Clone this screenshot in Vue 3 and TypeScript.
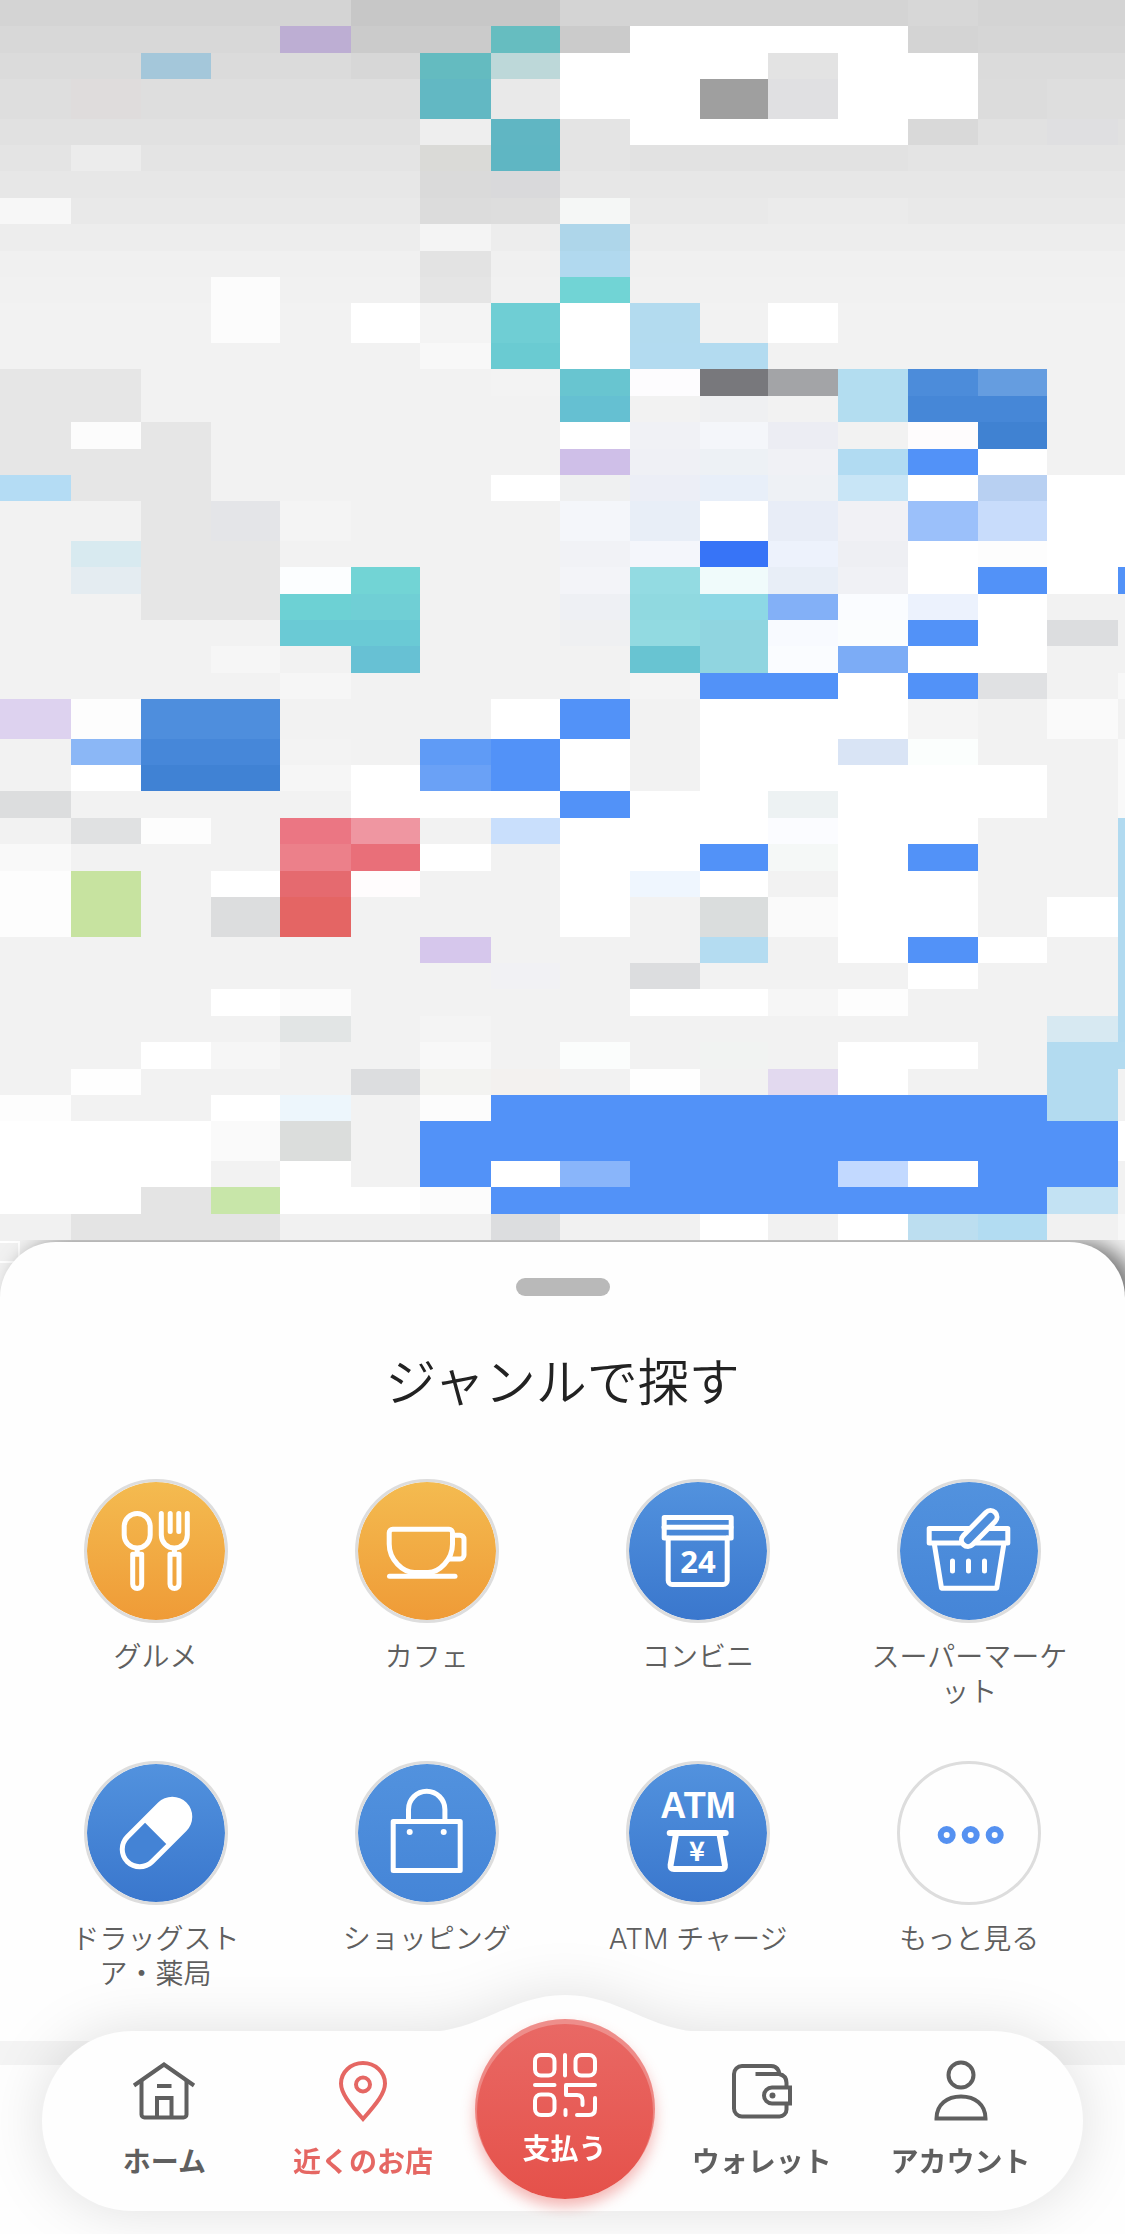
<script setup lang="ts">
interface Tile {
  x: number
  y: number
  w: number
  h: number
  fill: string
}

interface MapRow {
  top: number
  base: string
  tiles: string
}

// Column edges of the map tiles; the last tile runs off the right side.
const columns = [0, 71, 141, 211, 280, 351, 420, 491, 560, 630, 700, 768, 838, 908, 978, 1047, 1118, 1125]
const mapHeight = 1240

// Each entry of `tiles` is "column:colour" or "first-last:colour".
const rows: MapRow[] = [
  { top: 0, base: 'd4d4d4', tiles: '5-7:c7c7c7 13:d7d7d7' },
  { top: 26, base: 'd8d8d8', tiles: '4:bdaed3 5-6:cbcbcb 7:66bdc0 8:cbcbcb 9-12:ffffff 13:d4d4d4 14-16:d6d6d6' },
  { top: 53, base: 'dbdbdb', tiles: '2:a4c7da 5:d7d7d7 6:64bbc0 7:bdd8d9 8-10:ffffff 11:e3e3e3 12-13:ffffff' },
  { top: 79, base: 'dedede', tiles: '1:dfdcdc 6:62b8c3 7:e9e9e9 8-9:ffffff 10:9f9f9f 11:e0e0e2 12-13:ffffff 14:dcdcdc' },
  { top: 119, base: 'e1e1e1', tiles: '6:eeeeee 7:60b6c3 8:e4e4e4 9-12:ffffff 13:d9d9d9 15:dfdfe1' },
  { top: 145, base: 'e4e4e4', tiles: '1:ececec 6:dadad7 7:5fb6c3 9-12:e2e2e2' },
  { top: 171, base: 'e7e7e7', tiles: '6:dadada 7:d9d9db' },
  { top: 198, base: 'e9e9e9', tiles: '0:f7f7f7 6:dcdcdc 7:dddddd 8:f5f7f6 11-12:ebebeb' },
  { top: 224, base: 'ededed', tiles: '6:f4f4f4 8:aed6ea' },
  { top: 251, base: 'f0f0f0', tiles: '6:e3e3e3 8:b1d9ef' },
  { top: 277, base: 'f1f1f1', tiles: '3:fcfcfc 6:e5e5e5 8:71d4d5' },
  { top: 303, base: 'f2f2f2', tiles: '3:fcfcfc 5:ffffff 6:f4f4f4 7:6fced4 8:ffffff 9:b3dbef 11:ffffff' },
  { top: 343, base: 'f2f2f2', tiles: '6:f8f8f8 7:6acbd2 8:ffffff 9-10:b3dbf0' },
  { top: 369, base: 'f2f2f2', tiles: '0-1:e6e6e6 7:f3f3f3 8:68c5d0 9:fdfcfe 10:78787c 11:a3a4a7 12:b3ddf0 13:4c8cda 14:659de0' },
  { top: 396, base: 'f2f2f2', tiles: '0-1:e6e6e6 8:65c0d2 10:eff0f2 12:b3ddf0 13-14:4687d7' },
  { top: 422, base: 'f2f2f2', tiles: '0:e6e6e6 1:fcfcfc 2:e6e6e6 8:ffffff 9:f0f1f5 10:f4f6fa 11:ecedf3 13:fefcfd 14:4082d2' },
  { top: 449, base: 'f2f2f2', tiles: '0-2:e6e6e6 8:cfbfe8 9:eff0f5 10:edf1f5 11:f0f1f5 12:b1dbf2 13:5292f8 14:ffffff' },
  { top: 475, base: 'f2f2f2', tiles: '0:b4dcf4 1-2:e6e6e6 7:ffffff 8:eff0f1 9:eceef6 10:e8eff9 11:eef1f5 12:c8e5f6 13:ffffff 14:b8d0f2 15-16:ffffff' },
  { top: 501, base: 'f2f2f2', tiles: '2:e6e6e6 3:e4e5e8 4:f4f4f4 8:f4f6fa 9:e8eef7 10:ffffff 11:e8edf7 12:f1f1f5 13:9bc0fa 14:c8dcfb 15-16:ffffff' },
  { top: 541, base: 'f2f2f2', tiles: '1:d8eaf0 2-3:e6e6e6 8:f1f2f6 9:f4f6fb 10:3774f7 11:edf2fc 12:eeeff3 13:ffffff 14:fdfdfd 15-16:ffffff' },
  { top: 567, base: 'f2f2f2', tiles: '1:e4ecf1 2-3:e6e6e6 4:fcfeff 5:72d4d5 8:f3f4f8 9:93dbe2 10:f0fbfb 11:e8eef7 12:f0f1f5 13:ffffff 14:5292f8 15:ffffff 16:5292f8' },
  { top: 594, base: 'f2f2f2', tiles: '2-3:e6e6e6 4:6dd1d4 5:70cfd5 8:eef0f4 9:90d9e0 10:8dd8e5 11:83b0f7 12:fafcff 13:ecf2fd 14:ffffff' },
  { top: 620, base: 'f2f2f2', tiles: '4-5:6acad5 8:eff0f2 9:92dae1 10:90d5e0 11:f8faff 12:fbfdfe 13:5292f8 14:ffffff 15:dcdddf' },
  { top: 646, base: 'f2f2f2', tiles: '3:f6f6f6 5:67c1d4 9:68c4d2 10:90d5e0 11:fafcff 12:7cacf6 13-14:ffffff' },
  { top: 673, base: 'f2f2f2', tiles: '4:f6f6f6 9:f4f4f4 10-11:5292f8 12:ffffff 13:5292f8 14:e0e1e3 16:f8f8f8' },
  { top: 699, base: 'f2f2f2', tiles: '0:ddd2ef 1:fdfdfd 2-3:4e8edd 7:ffffff 8:5292f8 10-12:ffffff 13:f5f5f5 15:fafafa' },
  { top: 739, base: 'f2f2f2', tiles: '1:8bb7f6 2-3:4687d9 4:f3f3f3 6:5f9bf6 7:5292f8 8:ffffff 10-11:ffffff 12:d9e4f5 13:fbfefd 16:f9f9f9' },
  { top: 765, base: 'f2f2f2', tiles: '1:ffffff 2-3:4082d4 4:f6f6f6 5:ffffff 6:6aa1f6 7:5292f8 8:ffffff 10-14:ffffff 16:f9f9f9' },
  { top: 791, base: 'f2f2f2', tiles: '0:dcddde 5-7:ffffff 8:5292f8 9-10:ffffff 11:edf2f3 12-14:ffffff 16:f9f9f9' },
  { top: 818, base: 'f2f2f2', tiles: '1:e0e1e2 2:fdfdfd 4:eb7683 5:ef96a1 7:c9dffc 8-10:ffffff 11:fbfcff 12-13:ffffff 16:b1daf0' },
  { top: 844, base: 'f2f2f2', tiles: '0:f9f9f9 4:ec808a 5:e96f79 6:ffffff 8-9:ffffff 10:5292f8 11:f5f8f7 12:ffffff 13:5292f8 16:b1daf0' },
  { top: 871, base: 'f2f2f2', tiles: '0:fdfdfd 1:c7e3a0 3:ffffff 4:e56a6f 5:fffcfd 8:ffffff 9:eff6fe 10:ffffff 12-13:ffffff 16:b1daf0' },
  { top: 897, base: 'f2f2f2', tiles: '0:fdfdfd 1:c7e3a0 3:dcddde 4:e46564 8:ffffff 10:dadddd 11:fafafa 12-13:ffffff 15:ffffff 16:b1daf0' },
  { top: 937, base: 'f2f2f2', tiles: '6:d6c7ec 10:b4dcf1 12:ffffff 13:5292f8 14:ffffff 16:b1daf0' },
  { top: 963, base: 'f2f2f2', tiles: '7:f1f1f4 9:dcdddf 13:ffffff 16:b1daf0' },
  { top: 989, base: 'f2f2f2', tiles: '3:ffffff 4:fbfbfb 9-10:ffffff 11:f6f6f6 12:fdfdfd 16:b1daf0' },
  { top: 1016, base: 'f2f2f2', tiles: '4:e2e5e5 6:f4f4f4 15:d7e9f2 16:b1daf0' },
  { top: 1042, base: 'f2f2f2', tiles: '2:ffffff 3:f6f6f6 6:f8f8f8 8:fbfdfc 10:f1f3f2 12-13:ffffff 15-16:b3dbf0' },
  { top: 1069, base: 'f2f2f2', tiles: '1:fefefe 5:dcdddf 6:f3f3f1 7:f3f1ef 9:fefefe 11:e2d9ef 12:ffffff 15:b3dbf0' },
  { top: 1095, base: 'f2f2f2', tiles: '0:fdfdfd 3:ffffff 4:edf6fc 6:fcfcfc 7-14:5292f8 15:b3dbf0' },
  { top: 1121, base: 'f2f2f2', tiles: '0-2:ffffff 3:fafafa 4:dbdddc 6-15:5292f8 16:ffffff' },
  { top: 1161, base: 'f2f2f2', tiles: '0-2:ffffff 4:ffffff 6:5292f8 7:ffffff 8:89b5fa 9-11:5292f8 12:c2d9ff 13:ffffff 14-15:5292f8' },
  { top: 1187, base: 'f2f2f2', tiles: '0-1:ffffff 2:e4e4e4 3:c8e6a9 4-5:ffffff 6:fcfcfc 7-14:5292f8 15:c3e2f3' },
  { top: 1214, base: 'f1f1f1', tiles: '1-3:e4e4e4 7:dcdddf 10:ffffff 12:ffffff 13:bcdef0 14:b2dcf2 16:f7f7f7' },
]

const tiles: Tile[] = rows.flatMap((row, i) => {
  const bottom = i + 1 < rows.length ? rows[i + 1].top : mapHeight
  const h = bottom - row.top
  const base: Tile = { x: 0, y: row.top, w: 1125, h, fill: '#' + row.base }
  const own = row.tiles.split(' ').map((entry): Tile => {
    const [range, colour] = entry.split(':')
    const [first, last = first] = range.split('-').map(Number)
    return { x: columns[first], y: row.top, w: columns[last + 1] - columns[first], h, fill: '#' + colour }
  })
  return [base, ...own]
})

interface Genre {
  id: string
  label: string
  tone: string
}

const genres: Genre[] = [
  { id: 'gourmet', label: 'グルメ', tone: 'orange' },
  { id: 'cafe', label: 'カフェ', tone: 'orange' },
  { id: 'convenience', label: 'コンビニ', tone: 'blue' },
  { id: 'supermarket', label: 'スーパーマーケット', tone: 'sky' },
  { id: 'drugstore', label: 'ドラッグストア・薬局', tone: 'blue' },
  { id: 'shopping', label: 'ショッピング', tone: 'sky' },
  { id: 'atm', label: 'ATM チャージ', tone: 'blue' },
  { id: 'more', label: 'もっと見る', tone: 'plain' },
]

const tabs = [
  { id: 'home', label: 'ホーム' },
  { id: 'nearby', label: '近くのお店' },
  { id: 'pay', label: '支払う' },
  { id: 'wallet', label: 'ウォレット' },
  { id: 'account', label: 'アカウント' },
]
</script>

<template>
  <div class="app" lang="ja">
    <svg class="map" viewBox="0 0 1125 1240" shape-rendering="crispEdges" role="img" aria-label="地図">
      <rect v-for="(t, i) in tiles" :key="i" :x="t.x" :y="t.y" :width="t.w" :height="t.h" :fill="t.fill" />
    </svg>

    <div class="panel">
      <section class="sheet">
        <div class="handle"></div>
        <h1 class="title">ジャンルで探す</h1>
        <div class="genres">
          <button v-for="g in genres" :key="g.id" type="button" class="genre">
            <span class="disc" :class="g.tone">
              <svg class="glyph" viewBox="3 3 138 138" aria-hidden="true">
                <g v-if="g.id === 'gourmet'" class="line">
                  <rect x="40.2" y="34.5" width="26" height="34.5" rx="13" />
                  <path d="M48.7 75.2h9v29.8a4.5 4.5 0 0 1-9 0zM53.2 70v4" />
                  <path d="M77.3 34.5V56a13 13 0 0 0 26 0V34.5M86.2 34.5v18M94.8 34.5v18" />
                  <path d="M86 75.2h9v29.8a4.5 4.5 0 0 1-9 0zM90.4 70v4" />
                </g>
                <g v-else-if="g.id === 'cafe'" class="line">
                  <path d="M37.7 50.2H94a3.5 3.5 0 0 1 3.5 3.5V65C97.5 81 84 93.5 73 93.5H59.5C48 93.5 34.2 81 34.2 65V53.7a3.5 3.5 0 0 1 3.5-3.5z" />
                  <path d="M98.5 56.2H105a4 4 0 0 1 4 4V76a4 4 0 0 1-4 4H94" />
                  <path d="M34.5 97.3H100" />
                </g>
                <g v-else-if="g.id === 'convenience'" class="line">
                  <rect x="38.2" y="38.5" width="67" height="20.5" />
                  <path d="M38 48.2h67M42.2 59v42.5a4 4 0 0 0 4 4h51a4 4 0 0 0 4-4V59" />
                  <text class="digits" x="72" y="94">24</text>
                </g>
                <g v-else-if="g.id === 'supermarket'" class="line">
                  <rect x="32.2" y="49.5" width="78.6" height="14.5" />
                  <path d="M37.5 66l7 43.2h55.2l7-43.2" />
                  <path d="M55.5 82v10M71.5 82v10M87.5 82v10" />
                  <path class="grip-outer" d="M71 61L93.5 38" />
                  <path class="grip-inner" d="M71 61L93.5 38" />
                </g>
                <g v-else-if="g.id === 'drugstore'" transform="rotate(-45 72 72)">
                  <rect x="29" y="52" width="86" height="40" rx="20" fill="#fff" />
                  <path d="M71.5 57v30H49a15 15 0 0 1 0-30z" fill="#4483d5" />
                </g>
                <g v-else-if="g.id === 'shopping'" class="line">
                  <rect x="38.2" y="60.5" width="67" height="49" />
                  <path d="M53.5 60V48.5a18.2 18.2 0 0 1 36.4 0V60" />
                  <circle class="solid" cx="54.7" cy="71" r="3" />
                  <circle class="solid" cx="88.7" cy="71" r="3" />
                </g>
                <g v-else-if="g.id === 'atm'" class="line thick">
                  <text class="atm" x="72" y="57">ATM</text>
                  <path d="M43.7 72h56" />
                  <path d="M50 73l-5.4 31q-.4 4 3.4 4h47.5q3.8 0 3.4-4l-5.4-31" />
                  <text class="yen" x="71" y="100">¥</text>
                </g>
                <g v-else class="rings">
                  <circle cx="49.7" cy="74" r="6" />
                  <circle cx="73.7" cy="74" r="6" />
                  <circle cx="97.7" cy="74" r="6" />
                </g>
              </svg>
            </span>
            <span class="label">{{ g.label }}</span>
          </button>
        </div>
      </section>
    </div>
    <div class="below"></div>

    <nav class="tabbar" aria-label="メイン">
      <svg class="bump" viewBox="0 0 280 37" aria-hidden="true">
        <path d="M0 37C54 37 86 0 140 0S226 37 280 37z" fill="#fefefe" />
      </svg>
      <a v-for="t in tabs" :key="t.id" href="#" class="tab" :class="t.id">
        <svg class="tab-icon" viewBox="0 0 66 66" aria-hidden="true">
          <g v-if="t.id === 'home'">
            <path d="M3 27.5L33 6.5l30 21" />
            <path d="M10.5 23v33.5a3 3 0 0 0 3 3h39a3 3 0 0 0 3-3V23" />
            <path d="M26 59V40h14.5v19M26 28h14.5" />
          </g>
          <g v-else-if="t.id === 'nearby'">
            <path d="M33 61C19 45 11 35 11 25.5a22 20.5 0 0 1 44 0C55 35 47 45 33 61z" />
            <circle cx="33" cy="26.5" r="7" />
          </g>
          <g v-else-if="t.id === 'pay'">
            <rect x="3" y="3" width="19.5" height="20.5" rx="6" />
            <path d="M33 3v20.5" />
            <rect x="43.5" y="3" width="19.5" height="20.5" rx="6" />
            <path d="M3 33h19.5" />
            <rect x="3" y="42.5" width="19.5" height="20.5" rx="6" />
            <path d="M63 33H34v10h11q5.5 0 5.5 5.5V53" />
            <path d="M63 46v11q0 6-6 6H45M33.5 58v5" />
          </g>
          <g v-else-if="t.id === 'wallet'">
            <path d="M57.5 46v5.5a7 7 0 0 1-7 7H13a8 8 0 0 1-8-8V16a8 8 0 0 1 8-8h29q7 0 8.5 8h-24H50q7.5 1.5 7.5 9v4" />
            <path d="M61 29.5H43a8 8 0 0 0-8 8v0a8 8 0 0 0 8 8h18z" />
            <circle class="dot" cx="43.5" cy="37.5" r="3" />
          </g>
          <g v-else>
            <circle cx="33" cy="17" r="12.5" />
            <path d="M8.5 60.5C8.5 46.5 19 38.5 33 38.5s24.5 8 24.5 22z" />
          </g>
        </svg>
        <span class="tab-label">{{ t.label }}</span>
      </a>
    </nav>
  </div>
</template>

<style>
body {
  margin: 0;
  background: #fff;
}
</style>

<style scoped>
.app {
  position: relative;
  font-family: Inter, "Noto Sans CJK JP", sans-serif;
  color: #5f5f5f;
}

.map {
  position: relative;
  z-index: 1;
  display: block;
  width: 100%;
  height: auto;
}

.panel {
  position: relative;
  padding-top: 2px;
  overflow: hidden;
  background: #f1f1f1;
}

/* Edge of a building that shows beside the sheet's rounded corner. */
.panel::before {
  content: "";
  position: absolute;
  top: 1px;
  left: 0;
  width: 18px;
  height: 18px;
  border: 2px solid #fff;
  border-left: 0;
}

.sheet {
  position: relative;
  display: flex;
  flex-direction: column;
  align-items: center;
  padding: 36px 20px 49px;
  border-radius: 56px 56px 0 0;
  background: #fefefe;
  box-shadow: 12px 0 20px rgba(0, 0, 0, 0.5);
}

.handle {
  width: 94px;
  height: 18px;
  border-radius: 9px;
  background: #b9b9b9;
}

.title {
  margin: 57px 0 66px;
  font-size: 51px;
  font-weight: 350;
  line-height: 60px;
  color: #222;
}

.genres {
  display: grid;
  grid-template-columns: repeat(4, 1fr);
  row-gap: 51px;
  width: 100%;
}

.genre {
  display: flex;
  flex-direction: column;
  align-items: center;
  gap: 17px;
  padding: 0;
  border: 0;
  background: none;
  font: inherit;
  color: inherit;
}

.disc {
  box-sizing: border-box;
  width: 144px;
  height: 144px;
  border: 3px solid #ddd;
  border-radius: 50%;
}

.orange {
  background: linear-gradient(#f4bb50, #ef9b37) padding-box;
}

.blue {
  background: linear-gradient(#5292de, #3a77cd) padding-box;
}

.sky {
  background: linear-gradient(#5292de, #4585d7) padding-box;
}

.glyph {
  display: block;
  width: 138px;
  height: 138px;
}

.line {
  fill: none;
  stroke: #fff;
  stroke-width: 5;
  stroke-linecap: round;
  stroke-linejoin: round;
}

.thick {
  stroke-width: 6;
}

.grip-outer {
  stroke-width: 18;
}

.grip-inner {
  stroke: #4e8edc;
  stroke-width: 8;
}

.solid {
  fill: #fff;
  stroke: none;
}

.rings {
  fill: none;
  stroke: #5591f1;
  stroke-width: 6;
}

.glyph text {
  fill: #fff;
  stroke: none;
  font-weight: 700;
  text-anchor: middle;
}

.digits {
  font-family: "Noto Sans", sans-serif;
  font-size: 31px;
}

.atm {
  font-family: "Liberation Sans", sans-serif;
  font-size: 36px;
}

.yen {
  font-family: "Noto Sans CJK JP", sans-serif;
  font-size: 27px;
}

.label {
  width: 210px;
  min-height: 70px;
  font-size: 28px;
  font-weight: 350;
  line-height: 35px;
  text-align: center;
}

.below {
  height: 170px;
  border-top: 24px solid #f4f4f4;
  background: #fefefe;
}

.tabbar {
  position: fixed;
  right: 42px;
  bottom: 23px;
  left: 42px;
  z-index: 2;
  box-sizing: border-box;
  display: flex;
  height: 180px;
  padding: 0 23px;
  border-radius: 90px;
  background: #fefefe;
  filter: drop-shadow(0 0 28px rgba(0, 0, 0, 0.12));
}

.bump {
  position: absolute;
  bottom: 100%;
  left: 50%;
  width: 280px;
  height: 37px;
  margin: 0 0 -1px -138px;
}

.tab {
  position: relative;
  flex: 1;
  display: flex;
  flex-direction: column;
  align-items: center;
  gap: 20px;
  padding-top: 27px;
  color: #5f5f5f;
  text-decoration: none;
}

.nearby {
  color: #e56763;
}

.tab-icon {
  width: 66px;
  height: 66px;
  fill: none;
  stroke: currentColor;
  stroke-width: 4;
}

.dot {
  fill: currentColor;
  stroke: none;
}

.tab-label {
  font-size: 28px;
  font-weight: 700;
  line-height: 36px;
  white-space: nowrap;
}

.pay {
  box-sizing: border-box;
  flex: none;
  width: 180px;
  height: 180px;
  margin: -12px 8px 0 12px;
  padding-top: 33px;
  gap: 13px;
  border-radius: 50%;
  background: linear-gradient(#e96965, #e5514a);
  box-shadow: inset 0 3px 0 2px rgba(255, 255, 255, 0.25), 0 8px 14px rgba(229, 81, 74, 0.4);
  color: #fff;
}

.pay .tab-icon {
  stroke-linecap: round;
  stroke-linejoin: round;
}
</style>
